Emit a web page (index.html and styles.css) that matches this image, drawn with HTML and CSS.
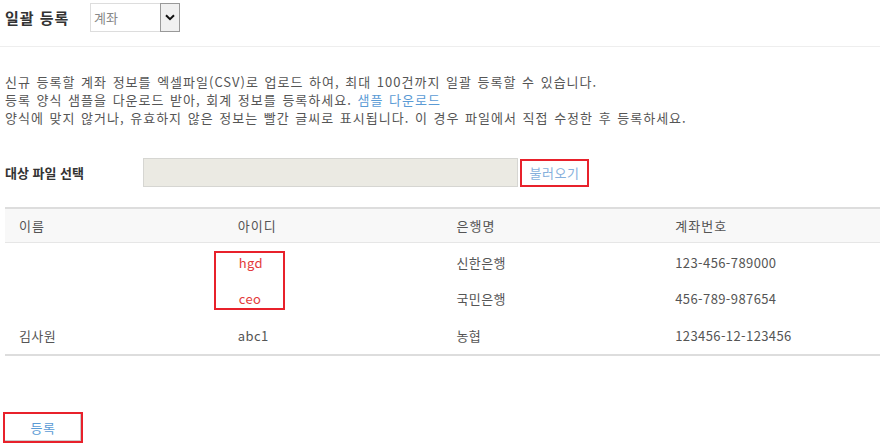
FILE: index.html
```html
<!DOCTYPE html>
<html lang="ko">
<head>
    <meta charset="UTF-8">
    <meta name="viewport" content="width=device-width, initial-scale=1.0">
    <title>일괄 등록</title>
    <link rel="stylesheet" href="styles.css">
</head>
<body>
<div class="page">
    <div class="title-row">
        <h1>일괄 등록</h1>
        <div class="select">
            <span class="select-text">계좌</span>
            <span class="select-arrow">
                <svg width="10" height="7" viewBox="0 0 10 7"><path d="M1 1.2 L5 5.2 L9 1.2" fill="none" stroke="#111" stroke-width="2"/></svg>
            </span>
        </div>
    </div>

    <div class="desc">
        <p>신규 등록할 계좌 정보를 엑셀파일(CSV)로 업로드 하여, 최대 100건까지 일괄 등록할 수 있습니다.</p>
        <p>등록 양식 샘플을 다운로드 받아, 회계 정보를 등록하세요. <a href="#" class="link">샘플 다운로드</a></p>
        <p>양식에 맞지 않거나, 유효하지 않은 정보는 빨간 글씨로 표시됩니다. 이 경우 파일에서 직접 수정한 후 등록하세요.</p>
    </div>

    <div class="file-row">
        <label class="file-label">대상 파일 선택</label>
        <div class="file-box"></div>
        <button class="btn-load">불러오기</button>
    </div>

    <div class="table-wrap">
        <table class="list">
            <thead>
            <tr>
                <th>이름</th>
                <th>아이디</th>
                <th>은행명</th>
                <th>계좌번호</th>
            </tr>
            </thead>
            <tbody>
            <tr>
                <td></td>
                <td class="error">hgd</td>
                <td>신한은행</td>
                <td>123-456-789000</td>
            </tr>
            <tr>
                <td></td>
                <td class="error">ceo</td>
                <td>국민은행</td>
                <td>456-789-987654</td>
            </tr>
            <tr>
                <td>김사원</td>
                <td>abc1</td>
                <td>농협</td>
                <td>123456-12-123456</td>
            </tr>
            </tbody>
        </table>
        <div class="error-mark"></div>
    </div>

    <button class="btn-submit">등록</button>
</div>
</body>
</html>
```

FILE: styles.css
```css
body {
    font-family: "Noto Sans CJK KR", "Noto Sans", sans-serif;
    margin: 0;
    padding: 0;
    color: #555;
    background: #fff;
}

.page {
    width: 880px;
}

.title-row {
    display: flex;
    align-items: center;
    height: 29px;
    margin-top: 3px;
    padding: 0 0 14px 5px;
    border-bottom: 1px solid #eee;
}

h1 {
    margin: 0;
    width: 85px;
    font-size: 15px;
    font-weight: bold;
    letter-spacing: 1px;
    color: #333;
}

.select {
    display: flex;
    width: 90px;
    height: 29px;
    box-sizing: border-box;
    border: 1px solid #ddd;
}

.select-text {
    flex: 1;
    padding-left: 3px;
    font-size: 13px;
    line-height: 27px;
    color: #888;
}

.select-arrow {
    display: flex;
    align-items: center;
    justify-content: center;
    width: 18px;
    background: #f0f0f0;
    border: 1px solid #999;
    margin: -1px -1px -1px 0;
}

.desc {
    margin: 26px 0 0 5px;
    font-size: 13px;
    line-height: 18px;
    color: #555;
    letter-spacing: 1px;
    word-spacing: 1px;
}

.desc p {
    margin: 0;
}

.link {
    color: #5b9bd5;
    text-decoration: none;
}

.file-row {
    display: flex;
    align-items: center;
    margin: 31px 0 0 5px;
}

.file-label {
    width: 138px;
    font-size: 13px;
    font-weight: bold;
    color: #333;
}

.file-box {
    width: 375px;
    height: 29px;
    box-sizing: border-box;
    background: #ebeae3;
    border: 1px solid #d6d6d2;
}

.btn-load {
    margin-left: 2px;
    width: 69px;
    height: 28px;
    padding: 0;
    background: #fff;
    border: 2px solid #e8212b;
    font-family: inherit;
    font-size: 13px;
    letter-spacing: 0.5px;
    color: #86b0dc;
}

.table-wrap {
    position: relative;
    margin: 20px 0 0 5px;
    width: 875px;
}

.list {
    width: 100%;
    border-collapse: collapse;
    table-layout: fixed;
    font-size: 13px;
    letter-spacing: 0.4px;
    border-bottom: 2px solid #ddd;
}

.list th {
    height: 33px;
    padding: 0 0 0 14px;
    text-align: left;
    font-weight: normal;
    letter-spacing: 1px;
    color: #555;
    background: #f8f8f8;
    border-top: 2px solid #ddd;
    border-bottom: 1px solid #e6e6e6;
}

.list td {
    height: 37px;
    padding: 0 0 0 14px;
    color: #555;
}

.list tbody tr:first-child td {
    height: 35px;
    padding-top: 2px;
}

.list td.error {
    color: #e33b3b;
    padding-left: 15px;
}

.error-mark {
    position: absolute;
    left: 209px;
    top: 44px;
    width: 71px;
    height: 59px;
    box-sizing: border-box;
    border: 2px solid #e8212b;
}

.btn-submit {
    display: block;
    margin: 56px 0 0 3px;
    width: 80px;
    height: 31px;
    padding: 0;
    background: #fff;
    border: 2px solid #e8212b;
    box-shadow: inset -1px -1px 0 #ccc;
    font-family: inherit;
    font-size: 13px;
    letter-spacing: 0.5px;
    color: #5b9bd5;
}
```
